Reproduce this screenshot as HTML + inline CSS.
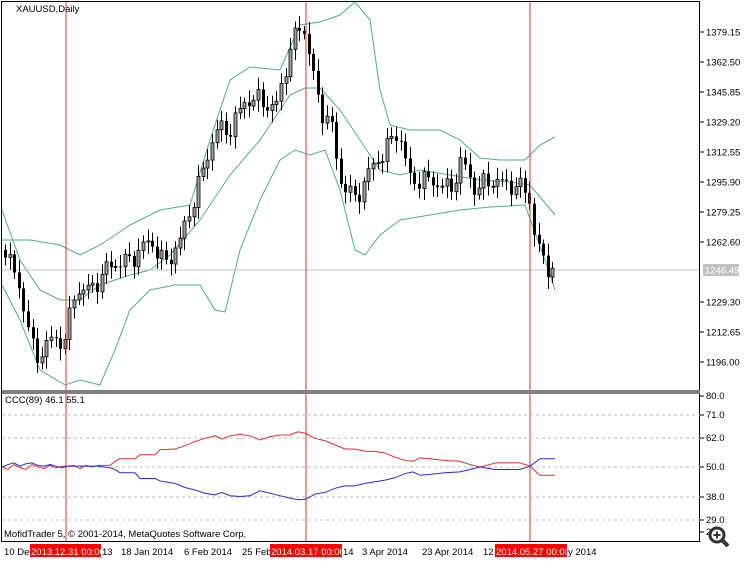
<!DOCTYPE html>
<html><head><meta charset="utf-8"><style>
html,body{margin:0;padding:0;background:#fff;width:750px;height:562px;overflow:hidden}
svg{display:block}
text{font-family:"Liberation Sans",sans-serif;font-size:9.5px;fill:#000}
</style></head><body>
<svg id="s" width="750" height="562" xmlns="http://www.w3.org/2000/svg">
<rect x="0" y="0" width="750" height="562" fill="#fff"/>
<g id="bands" fill="none" stroke="#4cb17d" stroke-width="1">
<polyline points="2,240 30,240 60,245 80,255 100,245 130,225 160,210 190,205 210,140 230,80 250,67 280,70 300,25 320,22 340,15 355,2 370,20 380,90 390,125 410,130 440,130 460,140 480,158 500,160 525,160 540,145 555,137"/>
<polyline points="2,210 20,260 40,290 60,300 80,300 100,285 130,275 150,270 170,255 200,220 230,175 260,140 290,95 305,88 320,88 340,110 360,140 380,170 400,175 420,170 450,175 480,180 510,182 530,185 555,215"/>
<polyline points="2,285 20,320 40,370 65,385 80,380 100,385 115,350 130,310 150,290 175,285 200,285 215,310 225,312 240,250 260,200 280,160 295,150 310,155 325,150 340,190 355,250 365,255 380,235 400,220 430,215 460,210 490,207 525,205 545,260 555,290"/>
</g>
<line x1="2" y1="270" x2="700" y2="270" stroke="#c0c0c0"/>
<g id="candles"></g>
<line x1="66" y1="2" x2="66" y2="542" stroke="#e03030"/>
<line x1="306" y1="2" x2="306" y2="542" stroke="#e03030"/>
<line x1="530" y1="2" x2="530" y2="542" stroke="#e03030"/>
<text x="16" y="12">XAUUSD,Daily</text>
<rect x="1.5" y="1.5" width="698" height="540" fill="none" stroke="#000"/>
<rect x="2" y="390" width="698" height="4" fill="#808080"/>
<g stroke="#bbb" stroke-dasharray="3,3">
<line x1="2" y1="415" x2="700" y2="415"/><line x1="2" y1="438" x2="700" y2="438"/>
<line x1="2" y1="467" x2="700" y2="467"/><line x1="2" y1="497" x2="700" y2="497"/>
<line x1="2" y1="520" x2="700" y2="520"/>
</g>
<g transform="translate(0,467) scale(1,0.82) translate(0,-467)">
<polyline fill="none" stroke="#e03030" vector-effect="non-scaling-stroke" points="2,467 8,470 14,464 20,468 26,470 32,464 38,467 44,469 50,465 56,468 62,466 68,466 74,465 80,469 86,465 92,467 98,465 110,465 115,460 120,457 135,457 140,452 155,452 160,446 175,445 185,441 195,436 205,432 215,429 222,433 230,429 240,427 250,429 260,434 270,430 280,428 290,428 298,424 306,426 315,432 325,435 335,440 345,445 355,445 365,448 375,448 385,450 395,455 405,459 413,460 420,456 430,457 445,459 460,460 470,464 480,467 490,464 495,462 505,462 520,462 530,466 540,477 555,477"/>
<polyline fill="none" stroke="#2a2ae0" vector-effect="non-scaling-stroke" points="2,467 8,464 14,462 20,466 26,463 32,462 38,465 44,466 50,464 56,466 62,468 68,466 74,466 80,466 86,466 92,466 98,466 110,468 115,470 120,474 135,474 140,481 155,481 160,484 175,487 185,492 195,495 205,499 215,501 222,498 230,502 240,503 250,502 260,496 270,499 280,502 290,505 298,507 306,506 315,500 325,498 335,493 345,490 355,490 365,487 375,485 385,483 395,480 405,475 413,473 420,477 430,476 445,474 460,473 470,470 480,467 490,469 495,470 505,470 520,470 530,466 540,457 555,457"/>
</g>
<text x="5" y="403">CCC(89) 46.1 55.1</text>
<text x="4" y="537" font-size="9">MofidTrader 5, © 2001-2014, MetaQuotes Software Corp.</text>
<g id="ax"></g>
<rect x="703" y="264" width="36" height="12" fill="#c0c0c0"/>
<text x="705" y="273.5" style="fill:#fff">1246.49</text>
<g>
<text x="4" y="555">10 Dec</text>
<rect x="30" y="544" width="71" height="13" fill="#ff0000"/><text x="31" y="555" style="fill:#fff">2013.12.31 00:00</text>
<text x="102" y="555">13</text>
<text x="121" y="555">18 Jan 2014</text>
<text x="184" y="555">6 Feb 2014</text>
<text x="242" y="555">25 Feb</text>
<rect x="270" y="544" width="72" height="13" fill="#ff0000"/><text x="271" y="555" style="fill:#fff">2014.03.17 00:00</text>
<text x="343" y="555">14</text>
<text x="362" y="555">3 Apr 2014</text>
<text x="422" y="555">23 Apr 2014</text>
<text x="483" y="555">12</text>
<rect x="495" y="544" width="72" height="13" fill="#ff0000"/><text x="496" y="555" style="fill:#fff">2014.05.27 00:00</text>
<text x="568" y="555">y 2014</text>
</g>
<circle cx="717" cy="535" r="7" fill="#fff" stroke="#333" stroke-width="3"/>
<line x1="722" y1="540" x2="728" y2="546" stroke="#333" stroke-width="4"/>
<path d="M713.5 535h7M717 531.5v7" stroke="#333" stroke-width="2"/>
</svg>
<script>
(function(){
var NS="http://www.w3.org/2000/svg";
function el(p,t,a){var e=document.createElementNS(NS,t);for(var k in a)e.setAttribute(k,a[k]);p.appendChild(e);return e;}
var ax=document.getElementById("ax");
var pl=[["1379.15",32],["1362.50",62],["1345.85",92],["1329.20",122],["1312.55",152],["1295.90",182],["1279.25",212],["1262.60",242],["1229.30",302],["1212.65",332],["1196.00",362]];
pl.forEach(function(p){el(ax,"line",{x1:700,y1:p[1],x2:704,y2:p[1],stroke:"#000"});var t=el(ax,"text",{x:706,y:p[1]+3.5});t.textContent=p[0];});
var il=[["80.0",399],["71.0",418],["62.0",441],["50.0",470],["38.0",500],["29.0",523],["2",535]];
il.forEach(function(p){el(ax,"line",{x1:700,y1:p[1]-3,x2:704,y2:p[1]-3,stroke:"#000"});var t=el(ax,"text",{x:706,y:p[1]});t.textContent=p[0];});
var kp=[[5,250],[20,290],[35,360],[50,340],[65,340],[75,290],[90,290],[110,265],[130,260],[150,240],[165,265],[180,240],[200,180],[215,130],[230,130],[245,100],[260,100],[275,110],[290,50],[302,20],[310,60],[320,110],[330,120],[340,180],[355,200],[370,170],[385,150],[398,130],[410,180],[430,180],[450,190],[462,160],[475,190],[490,180],[510,185],[528,190],[535,240],[545,265],[555,270]];
function f(x){for(var i=0;i<kp.length-1;i++){if(x<=kp[i+1][0]){var a=kp[i],b=kp[i+1];return a[1]+(b[1]-a[1])*(x-a[0])/(b[0]-a[0]);}}return kp[kp.length-1][1];}
var g=document.getElementById("candles");var prev=f(5);
for(var x=5;x<=556;x+=4.6){
 var c=f(x)+Math.sin(x*1.7)*7+Math.sin(x*0.53)*4;
 var o=prev;var hi=Math.min(o,c)-4-Math.abs(Math.sin(x*3.1))*8;var lo=Math.max(o,c)+4+Math.abs(Math.cos(x*2.3))*8;
 var xx=Math.round(x)+0.5;
 el(g,"line",{x1:xx,y1:hi,x2:xx,y2:lo,stroke:"#000"});
 var by=Math.min(o,c),bh=Math.max(1,Math.abs(o-c));
 if(c<o) el(g,"rect",{x:xx-1.5,y:by,width:3,height:bh,fill:"#a0a0a0",stroke:"#000","stroke-width":0.8});
 else el(g,"rect",{x:xx-1.5,y:by,width:3,height:bh,fill:"#000"});
 prev=c;
}
})();
</script>
</body></html>
